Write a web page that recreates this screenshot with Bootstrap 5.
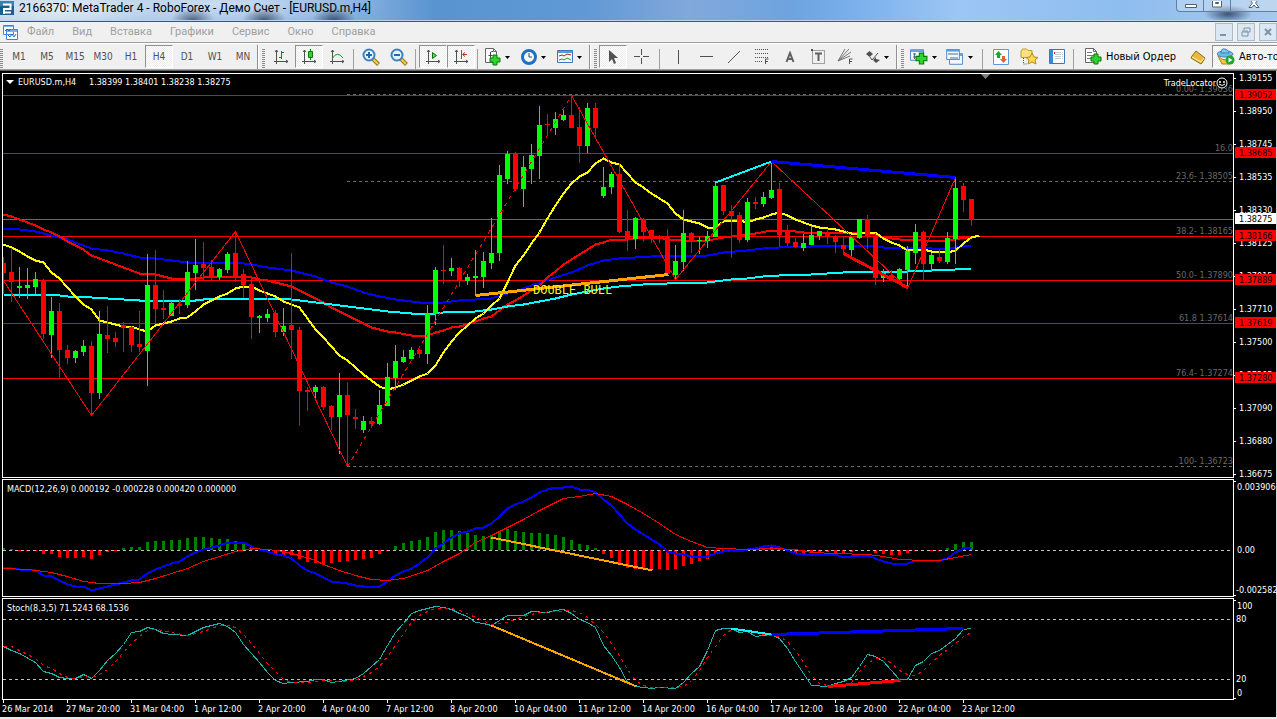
<!DOCTYPE html>
<html lang="ru">
<head>
<meta charset="utf-8">
<meta name="viewport" content="width=device-width, initial-scale=1">
<title>MetaTrader 4</title>
<link href="https://cdn.jsdelivr.net/npm/bootstrap@5.3.0/dist/css/bootstrap.min.css" rel="stylesheet">
<script src="https://cdn.jsdelivr.net/npm/bootstrap@5.3.0/dist/js/bootstrap.bundle.min.js"></script>
<style>
  body { background: #e8e8e8; font-family: Roboto, "Open Sans", sans-serif; font-size: 12px; line-height: 16px; overflow: hidden; }
  button { font: inherit; padding: 0; border: 0; background: none; color: inherit; }
  .title-bar {
    height: 22px; color: #000; border-bottom: 1px solid #3f5878; box-shadow: inset 0 -1px 0 #b9d3f0;
    background:
      radial-gradient(ellipse 22px 12px at 193px 20px, rgba(30,45,75,.65), transparent),
      radial-gradient(ellipse 22px 12px at 264px 20px, rgba(30,45,75,.7), transparent),
      radial-gradient(ellipse 22px 12px at 334px 20px, rgba(30,45,75,.7), transparent),
      radial-gradient(ellipse 24px 9px at 1228px 14px, rgba(30,45,75,.75), transparent),
      radial-gradient(ellipse 90px 26px at 60px 8px, rgba(255,255,255,.6), transparent),
      radial-gradient(ellipse 170px 20px at 220px 4px, rgba(255,255,255,.4), transparent),
      linear-gradient(90deg, #bcd3e9 0, #a3c3e6 20%, #7eabdc 29%, #5994d0 34%, #6099d5 46%, #82a8dc 54%, #6da3de 62%, #7ab0ec 67%, #9cc6f4 75%, #8ebdf0 88%, #a8c8ea 100%);
  }
  .win-buttons { height: 12px; border: 1px solid #5f7fa5; border-top: 0; border-right: 0; border-radius: 0 0 0 4px; background: rgba(255,255,255,.25); }
  .win-buttons button { width: 27px; height: 11px; border-right: 1px solid #5f7fa5; }
  .win-buttons button:last-child { width: 46px; border: 0; }
  .win-buttons svg, .mdi svg, .tool svg { display: block; margin: auto; }
  .menu-bar { height: 20px; background: #f0f0f0; font-size: 11px; padding-left: 3px; }
  .menu-bar a { color: #a0a0a0; text-decoration: none; padding: 0 9px; }
  .mdi button { width: 18px; height: 18px; border: 1px solid #a8bccc; background: #dbe7f2; }
  .tools { height: 28px; background: #f0f0f0; border-top: 1px solid #a0a0a0; border-bottom: 1px solid #a0a0a0; box-shadow: inset 0 1px 0 #fff; overflow: hidden; font: 11px/14px "DejaVu Sans Condensed", "DejaVu Sans", sans-serif; color: #000; padding-top: 2px; }
  .tool { width: 28px; height: 23px; flex: none; }
  .tool.wide { width: 36px; }
  .tool.period { font-size: 10px; color: #505050; }
  .tool.on { background: repeating-conic-gradient(#fff 0 25%, #ececec 0 50%) 0 0/2px 2px; border: 1px solid #fff; border-top-color: #909090; border-left-color: #909090; }
  .tool.auto { width: 104px; }
  .rule { width: 1px; height: 21px; background: #a0a0a0; flex: none; margin: 0 3px 0 2px; }
  .rule.loose { margin: 0 4px; }
  .band-end { width: 2px; height: 25px; border-left: 1px solid #909090; background: #fff; flex: none; }
  .grip { width: 3px; height: 19px; flex: none; margin: 0 2px 0 3px; background: repeating-linear-gradient(#8c8c8c 0 1px, #f0f0f0 1px 2px); }
  .grip.first { margin: 0 2px 0 0; }
  .workspace { background: #000; border-top: 1px solid #606060; border-right: 1px solid #d8d8d8; padding: 2px 0 0 2px; }
  .panel-row + .panel-row { margin-top: 1px; }
  .plot { border: 1px solid #fff; min-width: 0; }
  .plot svg { display: block; width: 100%; }
  .axis-col { width: 42px; flex: none; }
  .axis-col svg, .time-axis svg { display: block; width: 100%; overflow: visible; }
  svg.chart text { font: 9px "DejaVu Sans Condensed", "DejaVu Sans", sans-serif; }
  svg.chart text.note { font: 12px "Liberation Mono", monospace; }
  svg.chart .crisp, .crisp { shape-rendering: crispEdges; }
</style>
</head>
<body>
<svg class="d-none">
  <symbol id="axes" viewBox="0 0 16 16"><path d="M3.500 1v14M1 12.500h14M2 3l1.500-2L5 3M13 11l2 1.500-2 1.500" fill="none" stroke="#505050"/></symbol>
  <symbol id="plus" viewBox="0 0 12 12"><path d="M4 1h4v3h3v4H8v3H4V8H1V4h3z" fill="#2fd42f" stroke="#067a06"/></symbol>
  <symbol id="lens" viewBox="0 0 18 18"><path d="M10.500 10.500l6 6" stroke="#9a7a18" stroke-width="4"/><path d="M10.500 10.500l5.500 5.500" stroke="#f3c948" stroke-width="2"/><circle cx="7" cy="7" r="5.500" fill="#e4f3fd" stroke="#3b82c4" stroke-width="2"/></symbol>
  <symbol id="drop" viewBox="0 0 5 3"><path d="M0 0h5L2.500 3z" fill="#000"/></symbol>
  <symbol id="page" viewBox="0 0 12 15"><path d="M.5.5h8l3 3v11H.5z" fill="#fff" stroke="#666"/><path d="M8.500.5v3h3" fill="none" stroke="#666"/></symbol>
  <symbol id="window" viewBox="0 0 16 13"><path d="M.5.5h15v12H.5z" fill="#f3f8fd" stroke="#3a78bd"/><path d="M1 1h14v2H1z" fill="#5b9ade"/></symbol>
</svg>

<header class="title-bar d-flex align-items-start">
  <div class="d-flex align-items-center flex-fill ps-0">
    <svg width="15" height="15" viewBox="0 0 15 15" role="img" aria-label="RoboForex"><path d="M0 0h14v14H0z" fill="#1b5f8d"/><path d="M0 0h14v5H0z" fill="#3a82ae"/><path d="M4 13V8h6.500V3.500H3M4 11.500h7" fill="none" stroke="#fff" stroke-width="2"/></svg>
    <span class="ps-1 text-nowrap">2166370: MetaTrader 4 - RoboForex - Демо Счет - [EURUSD.m,H4]</span>
  </div>
  <div class="win-buttons d-flex">
    <button aria-label="Свернуть"><svg width="13" height="10" viewBox="0 0 13 10"><path d="M1.500 3.500h11v3h-11z" fill="#fff" stroke="#506070"/></svg></button>
    <button aria-label="Развернуть"><svg width="12" height="10" viewBox="0 0 12 10"><path d="M1.500-2v8h9v-8M4.500 1.500h3v1h-3z" fill="#fff" stroke="#506070"/></svg></button>
    <button aria-label="Закрыть"><svg width="12" height="10" viewBox="0 0 12 10"><path d="M1 6.500L4.500 2 1-2h3l2 2 2-2h3L7.500 2 11 6.500H8L6 4 4 6.500z" fill="#fff" stroke="#506070"/></svg></button>
  </div>
</header>

<nav class="menu-bar d-flex align-items-center">
  <svg width="15" height="15" viewBox="0 0 15 15"><path d="M.5.5h10v9H.5zM3.500 4.500h11v10h-11z" fill="#fff" stroke="#3b86dc"/><path d="M1 1h9v1H1zM4 5h10v2H4z" fill="#74b2f0"/><path d="M2 6l2-2 2 2 2-2M5 10l2 2 2-3 2 3 2-3" fill="none" stroke="#2b66b8"/></svg>
  <a href="#">Файл</a><a href="#">Вид</a><a href="#">Вставка</a><a href="#">Графики</a><a href="#">Сервис</a><a href="#">Окно</a><a href="#">Справка</a>
  <div class="mdi d-flex ms-auto">
    <button aria-label="Свернуть окно"><svg width="10" height="10"><path d="M1 8h6" stroke="#7d93a8" stroke-width="2"/></svg></button>
    <button class="mx-1" aria-label="Восстановить окно"><svg width="10" height="10"><path d="M3 3V1h6v4H7M1 5h6v4H1zM1 4h6" fill="none" stroke="#7d93a8"/></svg></button>
    <button aria-label="Закрыть окно"><svg width="8" height="8"><path d="M1 1l6 6M7 1L1 7" stroke="#7d93a8" stroke-width="2"/></svg></button>
  </div>
</nav>

<div class="tools d-flex align-items-start" role="toolbar" aria-label="Панель инструментов">
  <span class="grip first mt-1"></span>
  <button class="tool period">M1</button><button class="tool period">M5</button><button class="tool period">M15</button><button class="tool period">M30</button><button class="tool period">H1</button><button class="tool period on">H4</button><button class="tool period">D1</button><button class="tool period">W1</button><button class="tool period">MN</button>
  <span class="band-end"></span><span class="grip mt-1"></span>
  <button class="tool" aria-label="Бары"><svg width="16" height="16"><use href="#axes"/><path d="M8.500 2v8M6 8.500h2M9 3.500h2" stroke="#0a8a1a" fill="none" stroke-width="1"/></svg></button>
  <button class="tool on" aria-label="Свечи"><svg width="16" height="16"><use href="#axes"/><path d="M9.500 0v11" stroke="#067a06"/><path d="M7.500 2.500h4v6h-4z" fill="#2fd42f" stroke="#067a06"/></svg></button>
  <button class="tool" aria-label="Линия"><svg width="16" height="16"><use href="#axes"/><path d="M3 10q5-9 11-1" stroke="#1b9a2b" fill="none"/></svg></button>
  <span class="rule mt-1"></span>
  <button class="tool" aria-label="Увеличить"><svg width="18" height="18"><use href="#lens"/><path d="M4 7h6M7 4v6" stroke="#2468b0" stroke-width="2"/></svg></button>
  <button class="tool" aria-label="Уменьшить"><svg width="18" height="18"><use href="#lens"/><path d="M4 7h6" stroke="#2468b0" stroke-width="2"/></svg></button>
  <span class="rule mt-1"></span>
  <button class="tool on" aria-label="Автопрокрутка"><svg width="16" height="16"><use href="#axes"/><path d="M7.500 3.500v6l4-3z" fill="#5fd65f" stroke="#067a06"/></svg></button>
  <button class="tool on" aria-label="Сдвиг графика"><svg width="16" height="16"><use href="#axes"/><path d="M8.500 1v9" stroke="#2d6ca8"/><path d="M14 5.500H10M12 3.500l-2.500 2 2.500 2" stroke="#c03010" fill="none"/></svg></button>
  <span class="rule mt-1"></span>
  <button class="tool wide" aria-label="Индикаторы"><svg width="28" height="18"><use href="#page" x="0" y="0" width="12" height="15"/><path d="M8 3.500H6.500Q5.500 3.500 5.500 5v7M3.500 7.500h4" fill="none" stroke="#444"/><use href="#plus" x="4" y="6" width="12" height="12"/><use href="#drop" x="20" y="8" width="5" height="3"/></svg></button>
  <button class="tool wide" aria-label="Периоды"><svg width="28" height="18"><circle cx="8" cy="9" r="6.500" fill="#f2f7fb" stroke="#1d6fc4" stroke-width="3"/><path d="M8 5v4h3" fill="none" stroke="#444"/><use href="#drop" x="20" y="8" width="5" height="3"/></svg></button>
  <button class="tool wide" aria-label="Шаблоны"><svg width="28" height="18"><use href="#window" x="0" y="2" width="16" height="13"/><path d="M2 8l3-1 2 1 3-2 4 1" fill="none" stroke="#a52a1a"/><path d="M2 12l3-1 2 1 3-2 4 2" fill="none" stroke="#1b9a2b"/><use href="#drop" x="20" y="8" width="5" height="3"/></svg></button>
  <span class="band-end"></span><span class="grip mt-1"></span>
  <button class="tool on" aria-label="Курсор"><svg width="12" height="16"><path d="M2 1v12l3-3 2 5 2-1-2-5h4z" fill="#505050"/></svg></button>
  <button class="tool" aria-label="Перекрестие"><svg class="crisp" width="15" height="15"><path d="M7.500 0v6M7.500 9v6M0 7.500h6M9 7.500h6" stroke="#505050"/></svg></button>
  <span class="rule loose mt-1"></span>
  <button class="tool" aria-label="Вертикальная линия"><svg class="crisp" width="3" height="14"><path d="M1.500 0v14" stroke="#505050"/></svg></button>
  <button class="tool" aria-label="Горизонтальная линия"><svg class="crisp" width="13" height="3"><path d="M0 1.500h13" stroke="#505050"/></svg></button>
  <button class="tool" aria-label="Трендовая линия"><svg width="14" height="14"><path d="M1 13L13 1" stroke="#505050"/></svg></button>
  <button class="tool" aria-label="Фибоначчи"><svg width="16" height="17"><path d="M1 1.500h13M1 5.500h13M1 9.500h13M1 13.500h8" stroke="#505050" stroke-dasharray="1 1"/><path d="M11.500 16v-5h3M12 13.500h2" fill="none" stroke="#505050"/></svg></button>
  <button class="tool" aria-label="Текст"><svg width="12" height="12"><path d="M2.500 11L6 2l3.500 9M4 8h4" fill="none" stroke="#606060" stroke-width="2"/></svg></button>
  <button class="tool" aria-label="Метка"><svg width="14" height="15"><path d="M1.500 1.500h12v13h-12z" fill="none" stroke="#505050" stroke-dasharray="1 1"/><path d="M4 4.500h7M7.500 4v8" stroke="#606060" stroke-width="2"/><path d="M0 0h2v2H0z" fill="#505050"/></svg></button>
  <button class="tool" aria-label="Веер"><svg width="18" height="17"><path d="M1 13L12 1M1 13L14 4M1 13L8 1M1 13l12-5" fill="none" stroke="#777"/><path d="M12.500 16v-5h3M13 13.500h2" fill="none" stroke="#505050"/></svg></button>
  <button class="tool wide" aria-label="Стрелки"><svg width="24" height="14"><path d="M0 4l3.500-3L7 4 3.500 7zM7 10l3-3v2l4 1-4 3z" fill="#505050"/><path d="M4 7l2 3 6-7" fill="none" stroke="#505050"/><use href="#drop" x="18" y="6" width="5" height="3"/></svg></button>
  <span class="band-end"></span><span class="grip mt-1"></span>
  <button class="tool wide" aria-label="Новый график"><svg width="28" height="18"><use href="#window" x="0" y="1" width="14" height="12"/><path d="M4.500 5v6M3 6h3M3 9h8" stroke="#4c6f96"/><use href="#plus" x="5" y="4" width="13" height="13"/><use href="#drop" x="22" y="8" width="5" height="3"/></svg></button>
  <button class="tool wide" aria-label="Профили"><svg width="28" height="18"><use href="#window" x="3" y="5" width="14" height="12"/><use href="#window" x="0" y="1" width="14" height="11"/><path d="M2 6h10M4 10h8" stroke="#4c6f96"/><use href="#drop" x="22" y="8" width="5" height="3"/></svg></button>
  <span class="rule loose mt-1"></span>
  <button class="tool" aria-label="Обзор рынка"><svg width="16" height="16"><path d="M.5.5h15v15H.5z" fill="#fff" stroke="#5b9ade"/><path d="M5.500 2l3.500 4H7v3H4V6H2z" fill="#1fa52f"/><path d="M10.500 14L7 10h2V7h3v3h2z" fill="#e0603a"/></svg></button>
  <button class="tool" aria-label="Навигатор"><svg width="18" height="17"><path d="M1 3.500L2.500 1h4L8 2.500h4v7H1z" fill="#fae27c" stroke="#c19a1e"/><path d="M12 5l2 4 4 .5-3 2.500 1 4-4-2-4 2 1-4-3-2.500L10 9z" fill="#ffd94d" stroke="#b08a18"/><path d="M3.500 10v6h4" fill="none" stroke="#555" stroke-dasharray="1 1"/></svg></button>
  <button class="tool" aria-label="Терминал"><svg width="16" height="15"><path d="M.5.5h15v14H.5z" fill="#fff" stroke="#3a78bd"/><path d="M1 1h3v13H1z" fill="#3a8ad4"/><path d="M6 3.500h8M6 5.500h8M6 7.500h8M6 9.500h8" stroke="#c4ccd4" stroke-dasharray="6 1"/><path d="M5 4h1" stroke="#d02020" stroke-width="2"/></svg></button>
  <span class="rule mt-1"></span>
  <button class="tool d-flex align-items-center w-auto text-nowrap"><svg class="ms-2 me-1" width="17" height="17"><use href="#page" x="0" y="0" width="12" height="15"/><path d="M2 4.500h5M2 7.500h7M2 10.500h4" stroke="#777"/><use href="#plus" x="5" y="5" width="12" height="12"/></svg><span class="order-text">Новый Ордер</span></button>
  <button class="tool ms-2" aria-label="Редактор"><svg width="16" height="16"><path d="M6 2l9 7-3 5-1 1-10-6 1-2z" fill="#e9b93a" stroke="#946a10"/><path d="M2 8l9 5 3-4" fill="none" stroke="#fdf0b8"/></svg></button>
  <button class="tool on auto d-flex align-items-center text-nowrap"><svg class="ms-1 me-1" width="18" height="17"><path d="M1 8q8 8 14 0l-2 8H5z" fill="#f4c93c" stroke="#a8841c"/><ellipse cx="8" cy="6" rx="8" ry="3" fill="#6fb7e8" stroke="#3a86bd"/><path d="M4 5q0-5 4-4t4 4z" fill="#7fc4f0" stroke="#3a86bd"/><circle cx="13" cy="12" r="4.500" fill="#1fa52f"/><path d="M11.500 9.500v5l4-2.500z" fill="#fff"/></svg>Авто-торговля</button>
</div>

<main class="workspace">
  <div class="panel-row d-flex">
    <div class="plot flex-fill"><svg id="price" class="chart" height="403"></svg></div>
    <div class="axis-col"><svg id="priceAxis" class="chart" height="405"></svg></div>
  </div>
  <div class="panel-row d-flex">
    <div class="plot flex-fill"><svg id="macd" class="chart" height="116"></svg></div>
    <div class="axis-col"><svg id="macdAxis" class="chart" height="118"></svg></div>
  </div>
  <div class="panel-row d-flex">
    <div class="plot flex-fill"><svg id="stoch" class="chart" height="100"></svg></div>
    <div class="axis-col"><svg id="stochAxis" class="chart" height="102"></svg></div>
  </div>
  <div class="time-axis"><svg id="timeAxis" class="chart" height="17"></svg></div>
</main>

<script>
// [high, low, body top, body bottom, up] per bar, 8px apart
const bars = [
[257,294,263,273,0],[248,302,272,282,0],[267,298,286,288,1],[268,299,285,288,1],[272,294,279,287,1],[279,339,280,334,0],[297,358,311,335,1],[303,378,311,350,0],
[345,364,350,358,0],[350,363,351,358,1],[340,356,346,352,1],[341,415,346,393,0],[311,399,334,393,1],[306,353,335,339,0],[332,347,338,342,0],[322,352,325,328,0],
[326,352,327,345,0],[311,352,344,347,0],[254,386,285,351,1],[250,324,285,309,0],[290,319,308,310,0],[301,316,303,316,1],[299,314,304,306,0],[261,308,272,305,1],
[239,290,265,273,1],[242,280,264,268,0],[260,280,267,277,0],[268,280,269,277,1],[252,273,254,270,1],[231,282,253,276,0],[269,298,274,285,0],[277,339,284,317,0],
[315,333,316,318,1],[309,322,314,318,1],[310,337,313,332,0],[308,336,326,332,1],[253,359,325,330,0],[327,426,330,391,0],[387,411,390,392,0],[385,400,387,392,1],
[386,410,387,407,0],[405,430,406,417,0],[373,454,395,417,1],[382,466,395,415,0],[409,429,417,419,0],[416,433,421,430,1],[417,428,421,424,0],[390,425,405,424,1],
[363,406,377,406,1],[345,390,361,378,1],[350,363,357,362,1],[347,359,350,359,1],[349,358,350,354,0],[305,364,313,354,1],[267,325,270,314,1],[245,284,270,271,0],
[258,276,268,271,1],[267,287,268,280,0],[274,285,277,281,1],[250,296,276,278,1],[252,288,261,277,1],[218,269,253,263,1],[165,261,175,253,1],[151,184,154,179,1],
[152,191,153,189,0],[156,207,167,189,1],[144,184,155,169,1],[106,179,125,156,1],[114,136,124,125,0],[112,135,119,128,1],[108,121,115,120,1],[95,128,115,128,0],
[107,163,127,146,0],[103,153,108,146,1],[103,137,108,128,0],[167,198,187,196,1],[172,194,174,187,1],[163,233,174,232,0],[210,251,231,239,0],[217,249,218,239,1],
[218,242,219,232,0],[230,243,230,237,0],[235,243,237,238,0],[229,275,237,274,0],[245,280,261,275,1],[210,271,233,262,1],[232,253,233,241,0],[237,254,240,241,1],
[231,248,236,241,1],[181,237,186,237,1],[185,215,185,211,0],[205,258,211,216,0],[212,243,215,240,0],[198,242,202,240,1],[197,209,202,204,0],[192,207,197,204,1],
[161,199,190,198,1],[183,247,189,235,0],[225,246,232,243,0],[238,248,242,247,0],[234,251,243,248,1],[226,245,235,245,1],[231,240,231,236,1],[230,244,232,237,0],
[235,253,237,242,0],[237,254,245,249,0],[236,256,237,250,1],[219,239,219,238,1],[215,249,219,237,0],[233,285,236,278,0],[269,282,273,278,1],[270,280,275,279,0],
[268,280,269,279,1],[246,288,251,270,1],[224,264,232,253,1],[231,280,232,264,0],[253,272,255,264,1],[249,263,257,261,0],[232,264,238,262,1],[176,264,188,239,1],
[183,212,186,200,0],[199,226,199,220,0]];
const fast = [244,247,251,256,260,262,272,278,287,296,304,309,320,322,324,326,326,329,331,325,323,321,318,317,311,304,300,296,293,288,286,286,290,293,296,301,304,307,318,329,337,346,355,360,367,374,380,386,389,387,384,380,376,373,365,352,341,332,325,318,313,305,298,282,265,255,243,232,218,205,193,183,176,172,163,158,162,164,173,182,187,193,198,203,213,219,221,223,227,227,221,220,220,222,219,217,214,212,215,219,222,225,227,228,229,231,233,233,232,232,238,242,245,250,249,249,251,251,252,250,243,237,235];
const slowRed = "3,214 11,216 19,219 27,222 35,225 43,229 51,232 59,236 67,241 75,245 83,249 91,255 99,258 107,261 115,264 123,267 131,270 139,273 147,273 155,274 163,276 171,278 195,278 203,277 235,276 251,277 259,279 267,280 275,282 283,284 291,286 299,290 307,294 315,298 323,302 331,307 339,311 347,315 355,319 363,323 371,327 379,329 387,331 395,332 411,335 427,335 435,332 443,330 451,327 459,326 467,324 475,321 483,318 491,316 499,310 507,304 515,300 523,295 531,290 539,285 547,277 555,271 563,264 571,259 579,254 587,249 595,244 603,242 611,239 627,239 643,237 659,237 667,239 683,240 707,240 723,237 739,235 755,233 771,230 787,230 803,232 827,232 843,233 859,232 875,234 883,237 899,239 923,240 947,240 955,239 963,237 971,237";
const slowBlue = "3,228 19,229 35,231 51,235 67,239 83,245 91,248 107,250 123,253 139,257 155,258 171,260 187,262 235,262 251,264 267,267 283,269 291,270 299,272 315,276 331,282 347,286 363,292 379,296 395,299 411,301 427,303 443,302 459,300 491,298 499,295 507,293 515,291 523,288 531,285 539,282 555,277 571,272 587,265 603,260 619,258 635,257 667,255 683,256 707,255 723,252 747,250 763,248 779,247 811,246 867,245 883,247 907,247 931,248 947,248 955,247 971,245";
const slowCyan = "3,294 51,294 67,296 91,297 107,298 139,300 195,300 211,298 275,298 291,299 307,301 331,304 347,306 363,308 387,311 411,313 435,313 443,312 475,311 491,309 507,306 523,304 539,301 555,298 571,294 587,291 603,288 619,286 643,284 667,283 707,282 715,281 731,279 747,278 763,276 779,275 811,274 843,272 907,271 931,270 955,269 971,268";
const hist = [2,1,-1,-1,-1,-4,-4,-7,-8,-8,-7,-9,-5,-2,-1,2,3,3,8,9,9,10,10,12,13,13,12,11,11,9,7,3,1,-1,-4,-5,-5,-9,-12,-13,-14,-13,-12,-11,-10,-9,-8,-4,-1,4,7,9,10,13,18,20,20,19,17,15,14,14,18,21,19,18,17,17,16,15,13,10,6,5,2,-4,-8,-13,-18,-19,-19,-20,-19,-20,-19,-16,-14,-11,-9,-4,-2,-1,-2,0,1,2,3,1,-1,-4,-4,-3,-3,-2,-3,-3,-2,0,0,-3,-4,-5,-5,-3,-1,0,-1,-1,2,6,8,8];
const macdBlue = "3,567 11,568 19,569 35,570 43,575 51,576 59,580 67,584 75,586 83,586 91,590 99,588 107,586 115,584 123,582 131,580 139,579 147,573 155,569 163,566 171,563 179,561 187,556 195,552 203,549 211,547 219,545 227,542 243,542 251,546 259,549 267,551 275,554 283,555 291,558 299,565 307,570 315,573 323,577 331,581 339,582 347,583 355,585 363,586 379,586 387,581 395,575 403,571 411,568 419,563 427,557 435,548 443,543 451,537 459,533 467,531 475,528 483,527 491,523 499,516 507,508 515,504 523,501 531,497 539,492 547,489 555,487 563,487 571,486 579,489 587,489 595,492 603,499 611,505 619,514 627,523 635,529 643,534 651,539 659,544 667,551 675,553 683,554 691,556 707,556 715,553 723,551 731,550 739,551 747,549 755,548 763,546 771,545 779,547 787,550 795,553 803,554 835,554 843,557 851,556 859,555 867,555 875,558 883,561 891,563 907,563 915,560 939,560 947,558 955,552 963,548 971,547";
const macdRed = "3,568 27,569 51,572 67,576 83,581 99,583 123,583 139,582 155,578 171,573 187,568 203,561 219,556 235,551 251,548 267,549 283,551 299,555 315,560 323,564 339,570 355,575 371,579 387,580 403,578 427,570 443,561 459,553 475,542 491,535 507,527 523,519 539,510 555,502 563,498 579,496 595,493 611,496 627,504 643,513 659,523 675,534 691,541 707,547 723,548 747,549 771,548 795,549 811,552 835,553 867,554 883,556 899,559 923,560 939,560 955,557 971,554";
const stochMain = "3,646 11,650 19,653 35,662 43,671 51,673 59,677 67,678 75,678 83,674 91,678 99,670 107,660 115,653 123,644 131,632 139,631 147,627 155,629 163,633 171,634 187,635 195,631 203,627 211,625 219,623 227,626 235,632 243,644 251,653 259,662 267,672 275,680 283,683 291,682 307,681 315,679 323,679 331,682 339,681 355,678 363,673 371,666 379,659 387,645 395,632 403,623 411,613 419,610 427,608 435,606 443,607 451,609 459,613 467,616 475,622 483,623 491,625 499,620 507,615 523,615 531,611 547,612 555,610 563,609 571,613 579,619 587,622 595,627 603,645 611,655 619,667 627,682 635,686 643,687 651,688 659,687 675,688 683,682 691,673 699,666 707,650 715,630 723,628 731,628 739,632 747,631 755,636 763,635 771,634 779,638 787,648 795,661 803,673 811,685 827,686 835,683 843,681 851,677 859,666 867,654 875,656 883,661 891,670 899,679 907,679 915,665 923,661 931,653 939,650 947,644 955,638 963,629 971,628";
const stochSignal = "3,646 11,646 19,650 27,654 35,658 43,665 51,668 59,673 67,677 75,678 83,676 91,677 99,674 107,669 115,661 123,652 131,643 139,636 147,630 155,629 163,630 171,632 187,635 203,631 219,625 227,625 235,627 243,634 251,643 259,653 267,663 275,671 283,679 291,682 307,682 323,680 339,681 355,680 363,676 371,672 379,666 387,656 395,645 403,633 411,622 419,615 427,611 435,608 451,608 459,610 467,613 475,617 491,624 507,622 523,616 539,612 555,611 571,610 579,612 587,617 595,624 603,632 611,643 619,655 627,669 635,680 643,685 651,687 675,687 683,686 691,680 699,670 707,657 715,646 723,635 731,629 747,630 763,634 779,636 787,641 795,650 803,662 811,675 819,683 827,685 843,685 851,682 859,671 867,663 875,658 883,657 891,663 899,670 907,674 915,675 923,670 931,662 939,655 947,649 955,643 963,636 971,632";

const poly = (pts, color, w = 1, dash = '') => `<polyline class="crisp" points="${pts}" fill="none" stroke="${color}" stroke-width="${w}" stroke-dasharray="${dash}" transform="translate(.5 .5)"/>`;
const hline = (y, color, dash = '', x = 0) => `<line class="crisp" x1="${x}" x2="101%" y1="${y + .5}" y2="${y + .5}" stroke="${color}" stroke-dasharray="${dash}"/>`;
const rect = (x, y, w, h, c) => `<rect class="crisp" x="${x}" y="${y}" width="${w}" height="${h}" fill="${c}"/>`;
const text = (x, y, s, c = '#fff', extra = '') => `<text x="${x}" y="${y}" fill="${c}" ${extra}>${s}</text>`;
// Content of a panel is given in workspace coordinates and shifted to the panel's origin.
const put = (id, dx, dy, inner) => document.getElementById(id).innerHTML = `<g transform="translate(${-dx} ${-dy})">${inner}</g>`;

let p = '';
[95,153,236,280,323,378].forEach(y => p += hline(y, '#f00'));
p += hline(219, '#696969');
[94,181,466].forEach(y => p += hline(y, '#696969', '3 3', 347));
p += poly(slowBlue, '#00f', 2) + poly(slowRed, '#f00', 2) + poly(slowCyan, '#0ff', 2);
p += poly(fast.map((y, i) => `${3 + i * 8},${y}`).join(' '), '#ff0', 2);
bars.forEach(([h, l, t, b, up], i) => {
  const x = 3 + i * 8, c = up ? '#0f0' : '#f00';
  p += rect(x, h, 1, l - h, c) + rect(x - 2, t, 5, b - t, c);
});
p += poly('3,280 91,415 235,231 347,466', '#f00') + poly('347,466 571,95', '#f00', 1, '4 4') + poly('571,95 675,279 771,161 907,288 955,177', '#f00');
p += poly('475,295 668,274', '#ffa500', 3) + poly('715,182 771,161', '#0ff', 2) + poly('771,161 955,177', '#00f', 3) + poly('843,253 907,287', '#f00', 3);
p += text(533, 294, 'DOUBLE BULL', '#ff0', 'class="note"');
p += '<path d="M981 74h9l-4.500 5z" fill="#808080"/><path d="M6 80h8l-4 4z" fill="#fff"/>';
p += text(18, 85, 'EURUSD.m,H4') + text(89, 85, '1.38399 1.38401 1.38238 1.38275');
put('price', 3, 74, p);
// Right-aligned level captions follow the panel's right edge.
let lv = '';
[['0.00- 1.39036',92],['16.0',151],['23.6- 1.38505',179],['38.2- 1.38165',234],['50.0- 1.37890',278],['61.8 1.37614',321],['76.4- 1.37274',376],['100- 1.36723',464]]
  .forEach(([s, y]) => lv += text('100%', y - 74, s, '#696969', 'text-anchor="end"'));
lv += `<svg x="100%" overflow="visible"><g transform="translate(-11 9)"><circle r="5" fill="#000" stroke="#fff"/><circle cx="-2" cy="-1" r="1" fill="#fff"/><circle cx="2" cy="-1" r="1" fill="#fff"/><path d="M-3 1q3 3 6 0" fill="none" stroke="#fff"/></g>${text(-17, 12, 'TradeLocator', '#fff', 'text-anchor="end"')}</svg>`;
document.getElementById('price').insertAdjacentHTML('beforeend', lv);

let a = '';
['1.39155','1.38950','1.38745','1.38535','1.38330','1.38125','1.37915','1.37710','1.37500','1.37295','1.37090','1.36880','1.36675']
  .forEach((s, i) => a += rect(1234, 78 + i * 33, 2, 1, '#fff') + text(1239, 81 + i * 33, s));
[['1.39052',95],['1.38685',153],['1.38275',219],['1.38166',236],['1.37889',280],['1.37619',323],['1.37280',378]]
  .forEach(([s, y]) => a += rect(1235, y - 6, 41, 11, s === '1.38275' ? '#fff' : '#f00') + text(1239, y + 3, s, '#000'));
put('priceAxis', 1234, 73, a);

let m = '';
hist.forEach((v, i) => m += rect(2 + i * 8, v > 0 ? 550 - v : 550, 3, Math.abs(v), v > 0 ? '#008000' : '#f00'));
m += hline(550, '#c0c0c0', '3 3', 3) + poly(macdBlue, '#00f', 2) + poly(macdRed, '#f00') + poly('491,537 652,570', '#ffa500', 2);
m += text(7, 492, 'MACD(12,26,9) 0.000192 -0.000228 0.000420 0.000000');
put('macd', 3, 480, m);
put('macdAxis', 1234, 479, rect(1234,481,2,1,'#fff') + rect(1234,595,2,1,'#fff') + text(1237, 490, '0.003906') + text(1237, 553, '0.00') + text(1236, 593, '-0.002582'));

let s = hline(619, '#c0c0c0', '3 3', 3) + hline(679, '#c0c0c0', '3 3', 3);
s += poly(stochMain, '#20b2aa') + poly(stochSignal, '#f00', 1, '3 4');
s += poly('491,625 636,686', '#ffa500', 2) + poly('731,628 771,634', '#0ff', 2) + poly('771,634 963,628', '#00f', 3) + poly('827,686 900,680', '#f00', 3);
s += text(7, 611, 'Stoch(8,3,5) 71.5243 68.1536');
put('stoch', 3, 599, s);
put('stochAxis', 1234, 598, rect(1234,600,2,1,'#fff') + rect(1234,698,2,1,'#fff') + text(1237, 609, '100') + text(1236, 622, '80') + text(1236, 682, '20') + text(1237, 696, '0'));

let t = '';
['26 Mar 2014','27 Mar 20:00','31 Mar 04:00','1 Apr 12:00','2 Apr 20:00','4 Apr 04:00','7 Apr 12:00','8 Apr 20:00','10 Apr 04:00','11 Apr 12:00','14 Apr 20:00','16 Apr 04:00','17 Apr 12:00','18 Apr 20:00','22 Apr 04:00','23 Apr 12:00']
  .forEach((d, i) => t += rect(3 + i * 64, 700, 1, 3, '#fff') + text(2 + i * 64, 712, d));
put('timeAxis', 2, 700, t);
</script>
</body>
</html>
